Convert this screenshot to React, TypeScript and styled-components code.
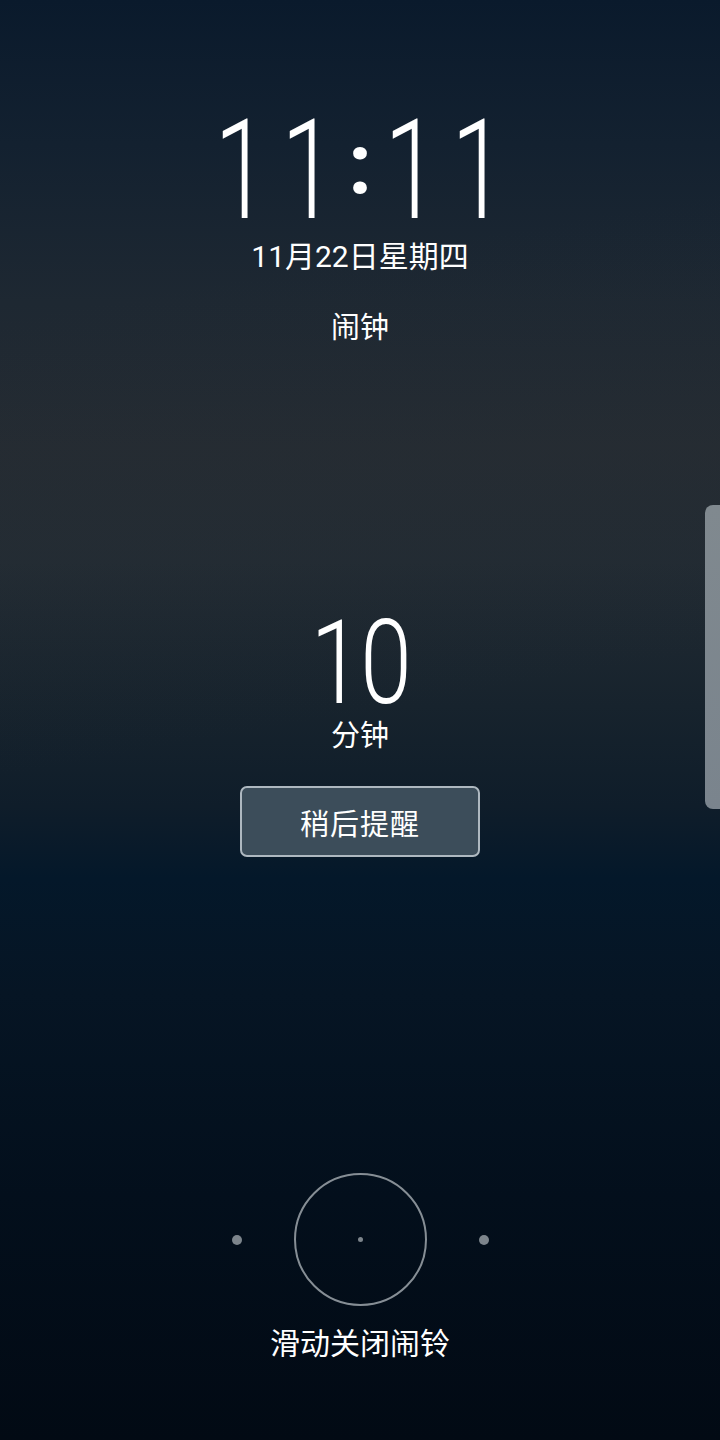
import React from "react";
import styled, { createGlobalStyle } from "styled-components";

const Global = createGlobalStyle`
  html, body { margin: 0; padding: 0; background: #030b16; }
  * { box-sizing: border-box; }
`;

const Screen = styled.div`
  position: relative;
  width: 720px;
  height: 1440px;
  overflow: hidden;
  display: flex;
  flex-direction: column;
  align-items: center;
  color: #ffffff;
  font-family: Roboto, "Noto Sans CJK SC", sans-serif;
  background:
    linear-gradient(170deg, rgba(0, 0, 0, 0) 20%, rgba(60, 60, 60, 0.06) 35%, rgba(0, 0, 0, 0) 50%),
    linear-gradient(
      180deg,
      #0a1a2c 0%,
      #132130 10%,
      #1e2832 21%,
      #242b32 31%,
      #222b33 39%,
      #17232d 49%,
      #0f1d2a 56%,
      #04182a 61%,
      #061524 69%,
      #030f1c 83%,
      #020a14 100%
    );
`;

const Clock = styled.div`
  margin-top: 100px;
  display: flex;
  justify-content: center;
  font-size: 140px;
  font-weight: 300;
  line-height: 140px;
  height: 140px;
`;

const ClockDigit = styled.span`
  display: flex;
  justify-content: center;
  width: 67px;
  transform: scaleX(0.7);
`;

const ClockColon = styled.span`
  display: flex;
  justify-content: center;
  width: 36px;
  font-size: 86px;
  font-weight: 700;
  line-height: 140px;
  transform: translateY(-5px);
`;

const DateLine = styled.div`
  margin-top: -3px;
  font-size: 30px;
  line-height: 40px;
`;

const Label = styled.div<{ $top: number }>`
  margin-top: ${(p) => p.$top}px;
  font-size: 29px;
  line-height: 40px;
  font-family: "Noto Sans CJK SC", sans-serif;
`;

const Snooze = styled.div`
  margin-top: 268px;
  font-size: 116px;
  font-weight: 300;
  line-height: 100px;
  height: 100px;
  letter-spacing: -2px;
  transform: scaleX(0.8);
`;

const SnoozeButton = styled.button`
  margin-top: 33px;
  width: 240px;
  height: 71px;
  border-radius: 7px;
  border: 2px solid #aeb8c0;
  background: #3c4d5a;
  color: #ffffff;
  font-family: "Noto Sans CJK SC", sans-serif;
  font-size: 29px;
  letter-spacing: 1px;
  padding: 0;
  cursor: pointer;
`;

const Spacer = styled.div`
  flex: 1;
`;

const SwipeRow = styled.div`
  display: flex;
  align-items: center;
  gap: 52px;
`;

const SideDot = styled.div`
  width: 10px;
  height: 10px;
  border-radius: 50%;
  background: #7d858c;
`;

const Ring = styled.div`
  width: 133px;
  height: 133px;
  border-radius: 50%;
  border: 2px solid #868e95;
  display: flex;
  align-items: center;
  justify-content: center;
`;

const CenterDot = styled.div`
  width: 5px;
  height: 5px;
  border-radius: 50%;
  background: #7d858c;
`;

const Hint = styled.div`
  margin-top: 15px;
  margin-bottom: 79px;
  font-size: 30px;
  line-height: 40px;
  font-family: "Noto Sans CJK SC", sans-serif;
`;

const EdgeHandle = styled.div`
  position: absolute;
  right: 0;
  top: 505px;
  width: 15px;
  height: 304px;
  border-radius: 8px 0 0 8px;
  background: linear-gradient(180deg, #80898f 0%, #7a848d 100%);
`;

export default function App() {
  return (
    <>
      <Global />
      <Screen>
        <Clock>
          <ClockDigit>1</ClockDigit>
          <ClockDigit>1</ClockDigit>
          <ClockColon>:</ClockColon>
          <ClockDigit>1</ClockDigit>
          <ClockDigit>1</ClockDigit>
        </Clock>
        <DateLine>11月22日星期四</DateLine>
        <Label $top={28}>闹钟</Label>
        <Snooze>10</Snooze>
        <Label $top={0}>分钟</Label>
        <SnoozeButton>稍后提醒</SnoozeButton>
        <Spacer />
        <SwipeRow>
          <SideDot />
          <Ring>
            <CenterDot />
          </Ring>
          <SideDot />
        </SwipeRow>
        <Hint>滑动关闭闹铃</Hint>
        <EdgeHandle />
      </Screen>
    </>
  );
}
